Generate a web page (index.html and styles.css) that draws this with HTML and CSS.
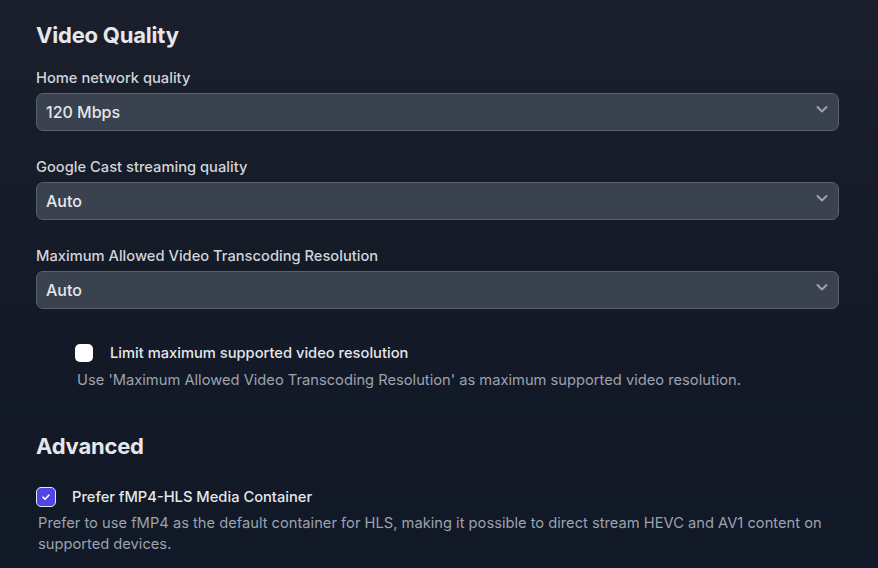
FILE: index.html
```html
<!DOCTYPE html>
<html>
<head>
<meta charset="utf-8">
<link rel="stylesheet" href="styles.css">
</head>
<body>
<main class="page">
  <h2 class="section-title first">Video Quality</h2>

  <div class="field">
    <label class="field-label">Home network quality</label>
    <div class="select"><span>120 Mbps</span><svg class="chev" viewBox="0 0 16 16"><path d="M3.5 6l4.5 4.5L12.5 6"/></svg></div>
  </div>

  <div class="field">
    <label class="field-label">Google Cast streaming quality</label>
    <div class="select"><span>Auto</span><svg class="chev" viewBox="0 0 16 16"><path d="M3.5 6l4.5 4.5L12.5 6"/></svg></div>
  </div>

  <div class="field">
    <label class="field-label">Maximum Allowed Video Transcoding Resolution</label>
    <div class="select"><span>Auto</span><svg class="chev" viewBox="0 0 16 16"><path d="M3.5 6l4.5 4.5L12.5 6"/></svg></div>
  </div>

  <div class="check-block indented">
    <div class="check-row">
      <span class="box"></span>
      <span class="check-label">Limit maximum supported video resolution</span>
    </div>
    <p class="desc">Use 'Maximum Allowed Video Transcoding Resolution' as maximum supported video resolution.</p>
  </div>

  <h2 class="section-title adv">Advanced</h2>

  <div class="check-block second">
    <div class="check-row">
      <span class="box checked"><svg viewBox="0 0 16 16"><path d="M4.5 8.2l2.4 2.3 4.6-4.8"/></svg></span>
      <span class="check-label">Prefer fMP4-HLS Media Container</span>
    </div>
    <p class="desc wide">Prefer to use fMP4 as the default container for HLS, making it possible to direct stream HEVC and AV1 content on supported devices.</p>
  </div>
</main>
</body>
</html>
```

FILE: styles.css
```css
html, body {
  margin: 0;
  padding: 0;
  height: 100%;
}
body {
  background: linear-gradient(180deg, #1a1f2b 0%, #141a26 50%, #111827 100%);
  font-family: Inter, "Noto Sans", sans-serif;
  color: #e5e7eb;
  overflow: hidden;
}
.page {
  padding: 0 39px 0 36px;
  display: flex;
  flex-direction: column;
}
.section-title {
  margin: 0;
  font-size: 22px;
  line-height: 28px;
  font-weight: 700;
  color: #e5e7eb;
  letter-spacing: -0.2px;
}
.section-title.first {
  margin-top: 21px;
}
.section-title.adv {
  margin-top: 41px;
}
.field {
  display: flex;
  flex-direction: column;
  margin-top: 19px;
}
.field + .field {
  margin-top: 26px;
}
.field-label {
  font-size: 14.7px;
  line-height: 20px;
  font-weight: 450;
  color: #d1d5db;
  margin-bottom: 5px;
}
.select {
  height: 38px;
  box-sizing: border-box;
  border: 1px solid #566070;
  border-radius: 7px;
  background: #3a4250;
  display: flex;
  align-items: center;
  justify-content: space-between;
  padding: 0 8px 0 9px;
  font-size: 16px;
  font-weight: 500;
  color: #e5e7eb;
}
.chev {
  width: 16px;
  height: 16px;
  margin-top: -6px;
  fill: none;
  stroke: #9ca3af;
  stroke-width: 2;
  stroke-linecap: round;
  stroke-linejoin: round;
}
.check-block {
  display: flex;
  flex-direction: column;
}
.check-block.indented {
  margin-left: 39px;
  margin-top: 34px;
}
.check-block.second {
  margin-top: 27px;
}
.check-row {
  display: flex;
  align-items: center;
  gap: 17px;
  height: 20px;
}
.second .check-row {
  gap: 16px;
}
.box {
  width: 18px;
  height: 18px;
  border-radius: 5px;
  background: #ffffff;
  box-sizing: border-box;
  flex: none;
}
.box.checked {
  width: 20px;
  height: 20px;
  background: #4f46e5;
  border: 1.5px solid #e5e7eb;
  display: flex;
  align-items: center;
  justify-content: center;
}
.box.checked svg {
  width: 14px;
  height: 14px;
  fill: none;
  stroke: #ffffff;
  stroke-width: 1.8;
  stroke-linecap: round;
  stroke-linejoin: round;
}
.check-label {
  font-size: 14.7px;
  line-height: 20px;
  font-weight: 450;
  color: #e5e7eb;
}
.desc {
  margin: 7px 0 0 2px;
  font-size: 14.7px;
  line-height: 21px;
  color: #9ca3af;
}
.wide {
  margin-top: 6px;
  max-width: 800px;
}
```
